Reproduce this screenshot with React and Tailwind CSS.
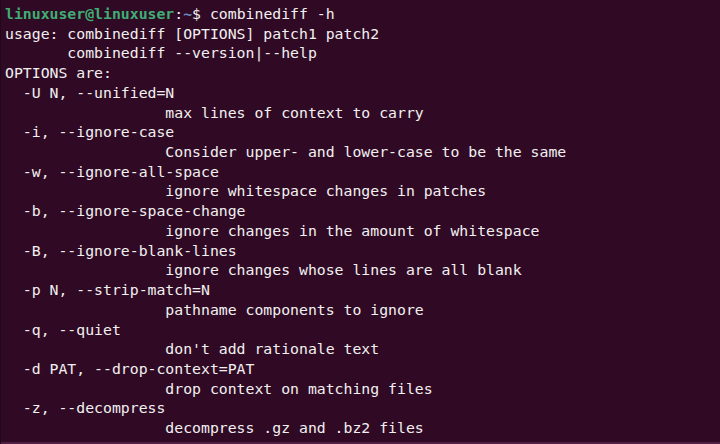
const desc = "                  ";

const lines = [
  "usage: combinediff [OPTIONS] patch1 patch2",
  "       combinediff --version|--help",
  "OPTIONS are:",
  "  -U N, --unified=N",
  desc + "max lines of context to carry",
  "  -i, --ignore-case",
  desc + "Consider upper- and lower-case to be the same",
  "  -w, --ignore-all-space",
  desc + "ignore whitespace changes in patches",
  "  -b, --ignore-space-change",
  desc + "ignore changes in the amount of whitespace",
  "  -B, --ignore-blank-lines",
  desc + "ignore changes whose lines are all blank",
  "  -p N, --strip-match=N",
  desc + "pathname components to ignore",
  "  -q, --quiet",
  desc + "don't add rationale text",
  "  -d PAT, --drop-context=PAT",
  desc + "drop context on matching files",
  "  -z, --decompress",
  desc + "decompress .gz and .bz2 files",
];

export default function App() {
  return (
    <div className="flex flex-col w-[720px] h-[444px] overflow-hidden bg-[#300a24] border-l border-[#22061a]">
      <pre className="flex-1 pt-[4px] pl-[4px] text-[14.8px] leading-[19.72px] text-[#f2f0f1] font-['DejaVu_Sans_Mono',monospace] whitespace-pre">
        <div>
          <span className="font-bold text-[#3fae74]">linuxuser@linuxuser</span>
          <span>:</span>
          <span className="font-bold text-[#6b8fc0]">~</span>
          <span>$ combinediff -h</span>
        </div>
        {lines.map((l, i) => (
          <div key={i}>{l}</div>
        ))}
      </pre>
      <div className="h-[2px] bg-[#4f1e42]" />
    </div>
  );
}
